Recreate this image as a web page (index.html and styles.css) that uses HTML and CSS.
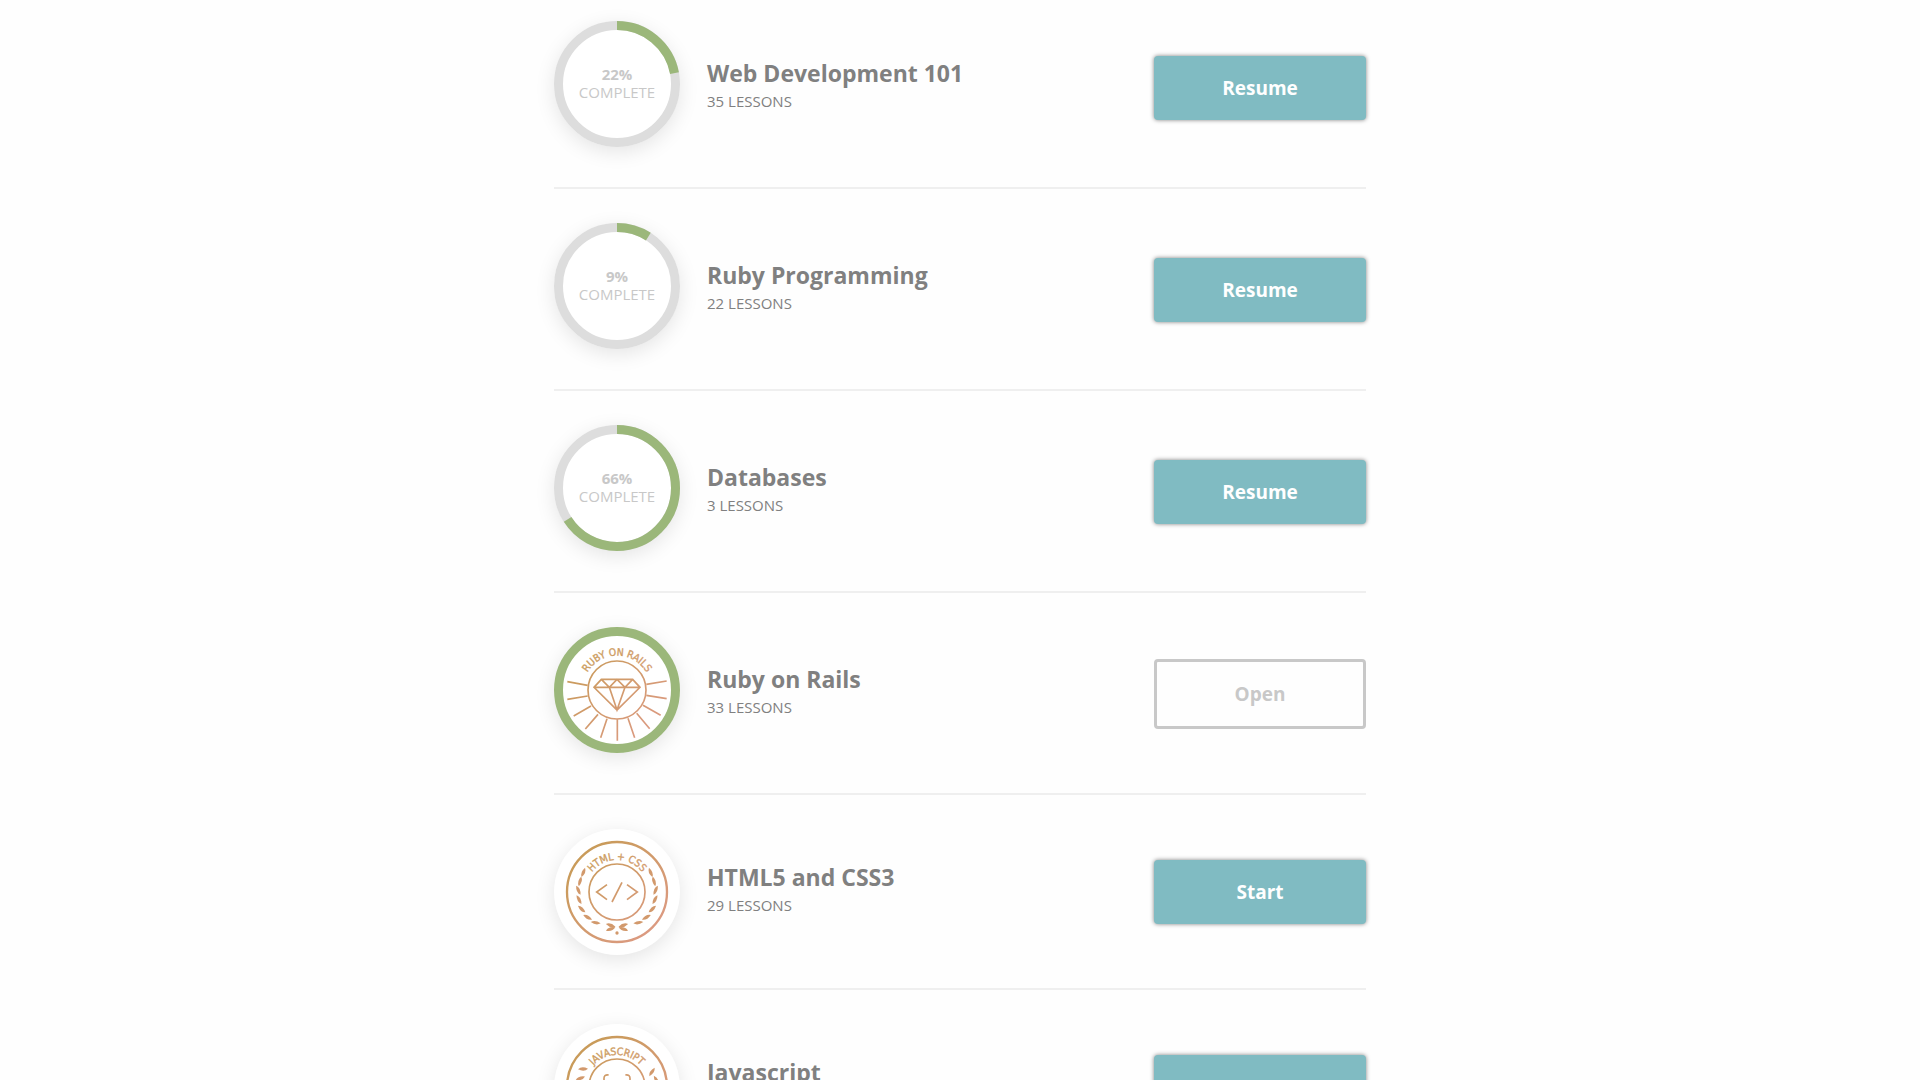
FILE: index.html
```html
<!DOCTYPE html>
<html lang="en">
<head>
<meta charset="utf-8">
<meta name="viewport" content="width=device-width, initial-scale=1">
<title>Courses</title>
<link rel="stylesheet" href="styles.css">
</head>
<body>
<svg class="defs" aria-hidden="true">
  <defs>
    <linearGradient id="copper" gradientUnits="userSpaceOnUse" x1="90" y1="90" x2="290" y2="300">
      <stop offset="0" stop-color="#c99b5a"/>
      <stop offset="1" stop-color="#db9a80"/>
    </linearGradient>
    <path id="leaf" d="M-15 0Q-3 -10 15 0Q3 10 -15 0Z"/>
  </defs>
</svg>
<main class="page">
  <ul class="courses">
    <li class="course">
      <div class="badge badge-progress">
        <svg class="ring" viewBox="0 0 126 126" aria-hidden="true">
          <circle class="ring-track" cx="63" cy="63" r="58.5"/>
          <circle class="ring-value" cx="63" cy="63" r="58.5" pathLength="100" style="stroke-dasharray: 22 100"/>
        </svg>
        <p class="status"><strong>22%</strong><span>COMPLETE</span></p>
      </div>
      <div class="info"><h2 class="title">Web Development 101</h2><p class="lessons">35 LESSONS</p></div>
      <button class="button" type="button">Resume</button>
    </li>
    <li class="course">
      <div class="badge badge-progress">
        <svg class="ring" viewBox="0 0 126 126" aria-hidden="true">
          <circle class="ring-track" cx="63" cy="63" r="58.5"/>
          <circle class="ring-value" cx="63" cy="63" r="58.5" pathLength="100" style="stroke-dasharray: 9 100"/>
        </svg>
        <p class="status"><strong>9%</strong><span>COMPLETE</span></p>
      </div>
      <div class="info"><h2 class="title">Ruby Programming</h2><p class="lessons">22 LESSONS</p></div>
      <button class="button" type="button">Resume</button>
    </li>
    <li class="course">
      <div class="badge badge-progress">
        <svg class="ring" viewBox="0 0 126 126" aria-hidden="true">
          <circle class="ring-track" cx="63" cy="63" r="58.5"/>
          <circle class="ring-value" cx="63" cy="63" r="58.5" pathLength="100" style="stroke-dasharray: 66 100"/>
        </svg>
        <p class="status"><strong>66%</strong><span>COMPLETE</span></p>
      </div>
      <div class="info"><h2 class="title">Databases</h2><p class="lessons">3 LESSONS</p></div>
      <button class="button" type="button">Resume</button>
    </li>
    <li class="course">
      <div class="badge badge-progress">
        <svg class="emblem" viewBox="0 0 378 378" role="img" aria-label="Ruby on Rails">
          <circle class="emblem-done" cx="189" cy="189" r="175.5"/>
          <path id="arc-rails" class="guide" d="M86 189A103 103 0 0 1 292 189"/>
          <text class="emblem-text" text-anchor="middle"><textPath href="#arc-rails" startOffset="50%">RUBY ON RAILS</textPath></text>
          <g class="line">
            <circle cx="189" cy="189" r="87"/>
            <path d="M40 164L101 175M40 217L101 207M59 267L111 237M94 306L132 262M140 332L159 275M190 341V277M338 162L277 172M338 215L277 205M320 265L267 235M287 305L248 259M242 332L222 274"/>
            <path d="M142 157H236L258 181L189 249L120 181ZM120 181H258M142 157L166 181L189 157L213 181L236 157M166 181L189 249L213 181"/>
          </g>
        </svg>
      </div>
      <div class="info"><h2 class="title">Ruby on Rails</h2><p class="lessons">33 LESSONS</p></div>
      <button class="button button-outline" type="button">Open</button>
    </li>
    <li class="course">
      <div class="badge">
        <svg class="emblem" viewBox="0 0 378 378" role="img" aria-label="HTML and CSS">
          <path id="arc-html" class="guide" d="M93 189A96 96 0 0 1 285 189"/>
          <text class="emblem-text" text-anchor="middle"><textPath href="#arc-html" startOffset="50%">HTML + CSS</textPath></text>
          <g class="line">
            <circle class="line-bold" cx="189" cy="189" r="150"/>
            <circle cx="189" cy="189" r="84"/>
            <path d="M159 167L128 189L159 212M204 160L174 219M219 167L250 189L219 212"/>
          </g>
          <g id="laurel-half" class="fill">
            <use href="#leaf" transform="translate(88 130) rotate(-70)"/>
            <use href="#leaf" transform="translate(78 157) rotate(-76)"/>
            <use href="#leaf" transform="translate(73 184) rotate(64)"/>
            <use href="#leaf" transform="translate(75 212) rotate(60)"/>
            <use href="#leaf" transform="translate(83 240) rotate(42)"/>
            <use href="#leaf" transform="translate(101 265) rotate(28)"/>
            <use href="#leaf" transform="translate(125 281) rotate(8)"/>
            <use href="#leaf" transform="translate(170 289) rotate(16)"/>
            <use href="#leaf" transform="translate(170 300) rotate(-20)"/>
          </g>
          <use href="#laurel-half" transform="translate(378 0) scale(-1 1)"/>
          <circle class="fill" cx="189" cy="312" r="5"/>
        </svg>
      </div>
      <div class="info"><h2 class="title">HTML5 and CSS3</h2><p class="lessons">29 LESSONS</p></div>
      <button class="button" type="button">Start</button>
    </li>
    <li class="course">
      <div class="badge">
        <svg class="emblem" viewBox="0 0 378 378" role="img" aria-label="Javascript">
          <path id="arc-js" class="guide" d="M93 189A96 96 0 0 1 285 189"/>
          <text class="emblem-text" text-anchor="middle"><textPath href="#arc-js" startOffset="50%">JAVASCRIPT</textPath></text>
          <g class="line">
            <circle class="line-bold" cx="189" cy="189" r="150"/>
            <circle cx="189" cy="189" r="84"/>
            <path d="M164 153Q149 151 150 165V177Q150 187 140 189Q150 191 150 201V213Q149 227 164 225M214 153Q229 151 228 165V177Q228 187 238 189Q228 191 228 201V213Q229 227 214 225"/>
          </g>
          <g class="fill">
            <use href="#leaf" transform="translate(87 135) rotate(-3)"/>
            <use href="#leaf" transform="translate(79 163) rotate(-22)"/>
            <use href="#leaf" transform="translate(294 144) rotate(-58)"/>
            <use href="#leaf" transform="translate(307 168) rotate(60)"/>
          </g>
        </svg>
      </div>
      <div class="info"><h2 class="title">Javascript</h2><p class="lessons">14 LESSONS</p></div>
      <button class="button" type="button">Start</button>
    </li>
  </ul>
</main>
</body>
</html>
```
FILE: styles.css
```css
* {
  box-sizing: border-box;
}

body {
  margin: 0;
  background: #fefefe;
  color: #808080;
  font-family: "Open Sans", "Noto Sans", sans-serif;
}

.defs {
  position: absolute;
  width: 0;
  height: 0;
}

.page {
  height: 100vh;
  padding: 0 16px;
  overflow-y: auto;
  scrollbar-width: none;
}

.courses {
  max-width: 812px;
  margin: 0 auto;
  padding: 0;
  list-style: none;
}

.course {
  display: flex;
  align-items: center;
  gap: 27px;
  padding: 34px 0 33px;
  border-bottom: 2px solid #efefef;
}

.course:first-child {
  padding-top: 21px;
}

.badge {
  display: grid;
  flex: none;
  width: 126px;
  height: 126px;
  border-radius: 50%;
  background: #fff;
  box-shadow: 0 5px 20px rgba(0, 0, 0, 0.1);
}

.badge-progress {
  margin-bottom: 7px;
}

.badge > * {
  grid-area: 1 / 1;
}

.ring,
.emblem {
  display: block;
  width: 100%;
  height: 100%;
}

.ring {
  transform: rotate(-90deg);
}

.ring circle {
  fill: none;
  stroke-width: 9;
}

.ring-track {
  stroke: #ddd;
}

.ring .ring-value {
  stroke: #9bb77a;
}

.status {
  display: flex;
  flex-direction: column;
  align-items: center;
  justify-content: center;
  margin: 0;
  padding-bottom: 2px;
  color: #c8c8c8;
  font-size: 15px;
  line-height: 18px;
}

.info {
  flex: 1;
  min-width: 0;
  padding-bottom: 6px;
}

.title {
  margin: 0;
  font-size: 23px;
  font-weight: 700;
  line-height: 32px;
}

.lessons {
  margin: 0;
  font-size: 15px;
  line-height: 24px;
}

.button {
  flex: none;
  width: 212px;
  padding: 18px 16px;
  border: 0;
  border-radius: 4px;
  background: #80bbc2;
  box-shadow: 0 0 4px rgba(0, 0, 0, 0.5);
  color: #fff;
  font: 700 19px/28px "Open Sans", "Noto Sans", sans-serif;
  cursor: pointer;
}

.button-outline {
  border: 3px solid #c8c8c8;
  background: transparent;
  box-shadow: none;
  color: #c8c8c8;
}

.emblem-done {
  fill: none;
  stroke: #9bb77a;
  stroke-width: 27;
}

.guide {
  fill: none;
}

.emblem-text {
  fill: url(#copper);
  stroke: url(#copper);
  stroke-width: 1;
  font: 31px "Liberation Sans Narrow", "DejaVu Sans Condensed", sans-serif;
}

.line {
  fill: none;
  stroke: url(#copper);
  stroke-width: 5;
}

.line-bold {
  stroke-width: 7;
}

.fill {
  fill: #d2996c;
}
```
